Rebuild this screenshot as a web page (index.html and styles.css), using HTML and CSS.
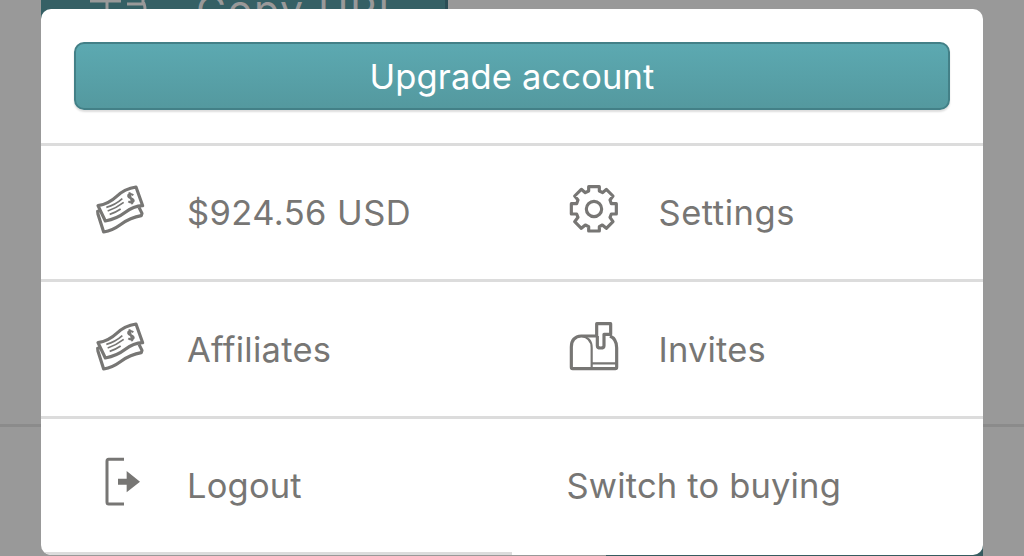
FILE: index.html
```html
<!DOCTYPE html>
<html lang="en">
<head>
<meta charset="utf-8">
<title>Account menu</title>
<link rel="stylesheet" href="styles.css">
</head>
<body>
<div class="backdrop">
  <div class="copy-button">
    <svg class="copy-icon" viewBox="0 0 60 10"><path d="M0 1H31M17 0V10M37 4H54M53 0V2Q55 4 55 10"/></svg>
    <span>Copy URL</span>
  </div>
  <div class="page-rule"></div>
  <div class="page-footer"></div>
</div>
<main class="modal">
  <header class="modal-head"><a class="upgrade"><span>Upgrade account</span></a></header>
  <nav class="menu">
    <div class="row">
      <a class="item">
        <svg class="icon" viewBox="0 0 225 210"><g id="money"><path class="thick" d="M42 92Q75 86 98 64Q122 41 156 36L176 92Q148 93 124 112Q98 132 64 138Z"/><path class="thick" d="M49 107L41 109L42 118L59 171Q86 166 109 149Q140 127 172 122L174 115L165 97"/><path class="thin" d="M67 97Q94 90 115 71M71 108Q97 99 119 82M77 118Q94 113 110 102"/><path class="coin" d="M148 61Q139 53 133 60C128 71 151 68 149 78Q144 87 133 79M136 52L145 88"/></g></svg>
        <span class="balance">$924.56 USD</span>
      </a>
      <a class="item">
        <svg class="icon" viewBox="0 0 225 210"><path class="thick" d="M98 35H130V48L140 53L151 43L171 63L162 75L166 86H181V117H166L162 127L171 140L151 160L139 150L130 155V168H98V155L88 150L76 160L56 140L66 127L62 117H46V86H62L66 75L56 63L76 43L88 53L98 48Z"/><circle class="thick" cx="114" cy="102" r="23"/></svg>
        <span class="settings">Settings</span>
      </a>
    </div>
    <div class="row">
      <a class="item">
        <svg class="icon" viewBox="0 0 225 210"><use href="#money"/></svg>
        <span class="affiliates">Affiliates</span>
      </a>
      <a class="item mailbox">
        <svg class="icon" viewBox="0 0 225 210"><path class="thick" d="M122 75H76Q46 77 46 108V169Q46 173 50 173H178Q182 173 182 169V110Q182 84 162 75"/><path class="mid" d="M76 75Q107 80 107 110V173M107 157H182"/><path class="thick" d="M122 76V38H164V70H144V104Q144 111 134 111Q124 111 124 104V75"/></svg>
        <span class="invites">Invites</span>
      </a>
    </div>
    <div class="row">
      <a class="item">
        <svg class="icon" viewBox="0 0 225 210"><path class="bracket" d="M120 34H74Q69 34 69 40V162Q69 168 74 168H120"/><path class="arrow" d="M102 92H128V69L168 101L128 133V110H102Z"/></svg>
        <span class="logout">Logout</span>
      </a>
      <a class="item switch"><span class="switching">Switch to buying</span></a>
    </div>
  </nav>
</main>
</body>
</html>
```
FILE: styles.css
```css
* { box-sizing: border-box; }
body {
  margin: 0;
  width: 1024px;
  height: 556px;
  overflow: hidden;
  position: relative;
  background: #999;
  color: #777674;
  font-family: Inter, "Liberation Sans", sans-serif;
  font-size: 34.5px;
  font-weight: 370;
}
.backdrop { position: absolute; inset: 0; }
.copy-button {
  width: 407px;
  height: 40px;
  margin-left: 41px;
  padding-left: 49px;
  display: flex;
  align-items: flex-start;
  gap: 46px;
  background: #356065;
  border-right: 3px solid #2b4d55;
  color: #999;
  font-size: 41px;
  line-height: 42px;
  white-space: nowrap;
}
.copy-button span { margin-top: -11px; letter-spacing: 1.7px; }
.copy-icon { flex: none; width: 60px; height: 10px; fill: none; stroke: #999; stroke-width: 3; }
.page-rule { margin-top: 384px; height: 3px; background: #8b8b8b; }
.page-footer { position: absolute; left: 606px; right: 41px; bottom: 0; height: 12px; background: #365b5f; }
.modal {
  position: relative;
  width: 942px;
  height: 546px;
  margin: 9px 0 0 41px;
  border-radius: 10px;
  background: #fff;
  overflow: hidden;
}
.modal::after {
  content: "";
  position: absolute;
  left: 2px;
  bottom: 0;
  width: 469px;
  height: 3px;
  background: #dcdcdc;
}
.modal-head { height: 133.5px; padding: 33px 33px 0; }
.upgrade {
  display: flex;
  align-items: center;
  justify-content: center;
  height: 68px;
  border: 2px solid #438087;
  border-radius: 10px;
  background: linear-gradient(#5ca9b1, #54999f);
  box-shadow: 0 2px 2px #0002;
  color: #fff;
}
.upgrade span { letter-spacing: .15px; }
.row {
  display: grid;
  grid-template-columns: 472px 470px;
  height: 136.5px;
  border-top: 3px solid #dcdcdc;
}
.item { display: flex; align-items: center; padding-left: 43px; white-space: nowrap; }
.item span { margin-top: 1px; }
.icon { flex: none; width: 75px; height: 70px; margin: -4px 28px 0 0; fill: none; stroke: #777674; stroke-linejoin: round; }
.item:nth-child(2) .icon { margin-right: 27.5px; }
.thick { stroke-width: 9.5; }
.mid { stroke-width: 6.5; }
.thin { stroke-width: 5; }
.coin { stroke-width: 6; }
.bracket { stroke-width: 9; }
.arrow { fill: #777674; stroke: none; }
.mailbox .icon { margin-top: -6px; }
.switch { padding-left: 53.5px; }
.balance { letter-spacing: .42px; }
.settings { letter-spacing: .55px; }
.affiliates { letter-spacing: .25px; }
.invites, .logout, .switching { letter-spacing: .18px; }
```
